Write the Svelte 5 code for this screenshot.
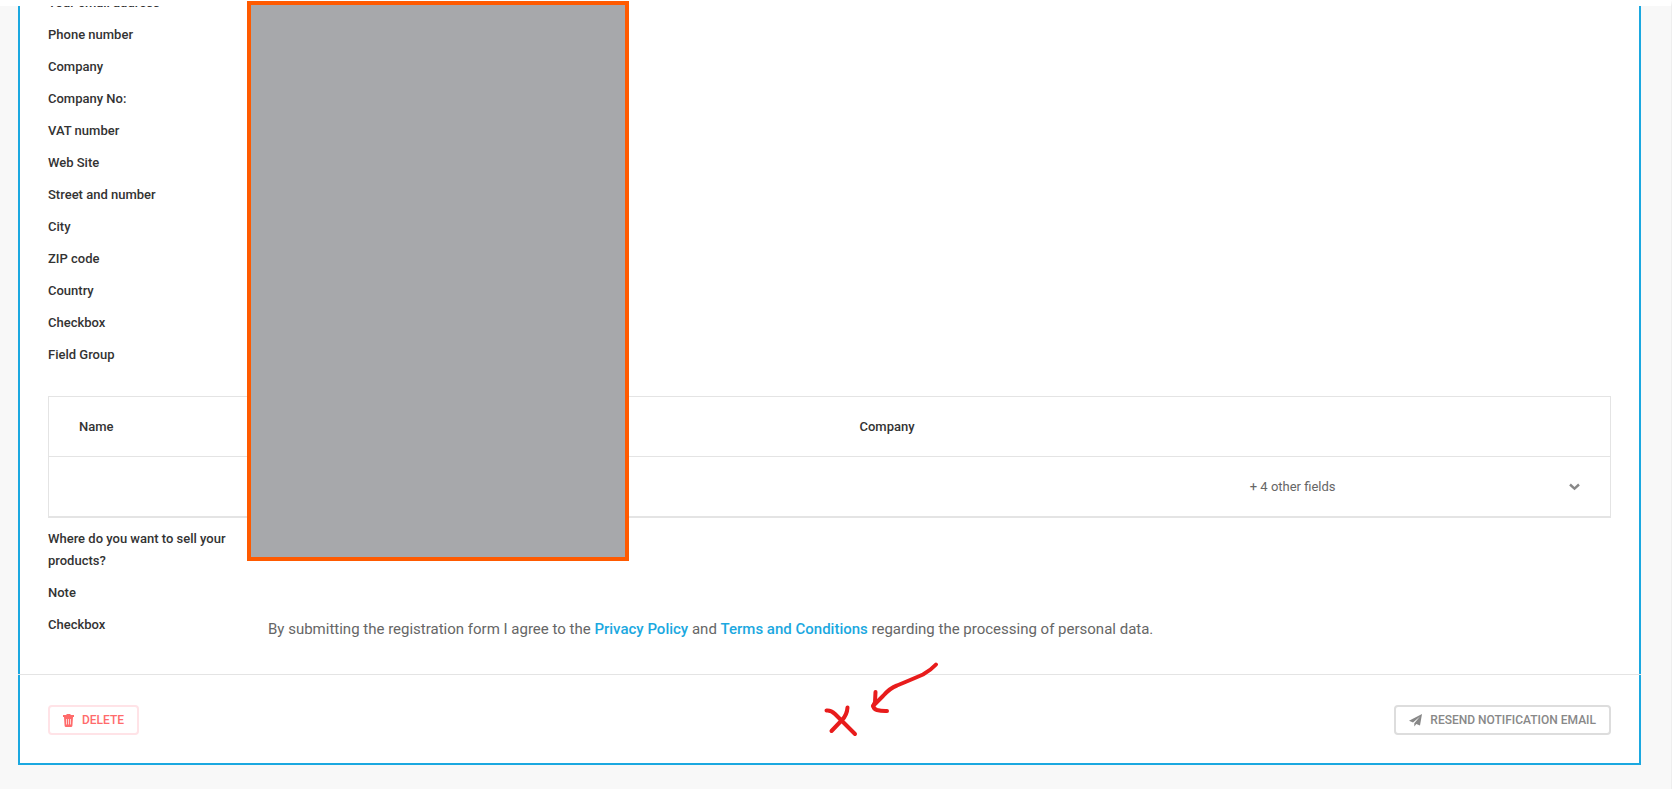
<script lang="ts">
	interface Field {
		label: string;
		consent?: boolean;
	}

	const fields: Field[] = [
		{ label: 'Your email address' },
		{ label: 'Phone number' },
		{ label: 'Company' },
		{ label: 'Company No:' },
		{ label: 'VAT number' },
		{ label: 'Web Site' },
		{ label: 'Street and number' },
		{ label: 'City' },
		{ label: 'ZIP code' },
		{ label: 'Country' },
		{ label: 'Checkbox' },
		{ label: 'Field Group' }
	];

	const moreFields: Field[] = [
		{ label: 'Where do you want to sell your products?' },
		{ label: 'Note' },
		{ label: 'Checkbox', consent: true }
	];
</script>

{#snippet fieldRow(field: Field)}
	<div class="field">
		<dt class="field-label">{field.label}</dt>
		<dd class="field-value">
			{#if field.consent}
				<p class="consent">
					By submitting the registration form I agree to the <a href="#privacy">Privacy Policy</a> and
					<a href="#terms">Terms and Conditions</a> regarding the processing of personal data.
				</p>
			{/if}
		</dd>
	</div>
{/snippet}

<div class="page">
	<main class="card">
		<div class="card-body">
			<dl class="fields scrolled">
				{#each fields as field}
					{@render fieldRow(field)}
				{/each}
			</dl>

			<table class="group">
				<thead>
					<tr>
						<th>Name</th>
						<th></th>
						<th>Company</th>
						<th></th>
					</tr>
				</thead>
				<tbody>
					<tr>
						<td></td>
						<td></td>
						<td></td>
						<td>
							<div class="more">
								<span>+ 4 other fields</span>
								<button class="expand" type="button" aria-label="Expand">
									<svg width="11" height="8" viewBox="0 0 11 8">
										<path d="M1 1.5L5.500 5.700L10 1.5" fill="none" stroke="#888" stroke-width="2.4" />
									</svg>
								</button>
							</div>
						</td>
					</tr>
				</tbody>
			</table>

			<dl class="fields">
				{#each moreFields as field}
					{@render fieldRow(field)}
				{/each}
			</dl>
		</div>

		<div class="divider"></div>

		<!-- Actions -->
		<div class="actions">
			<button class="btn danger" type="button">
				<svg width="11" height="13" viewBox="0 0 11 13">
					<path
						fill="currentColor"
						fill-rule="evenodd"
						d="M3.500 0h4v1H11v2H0V1h3.500zM1 3h9L9.400 11.700Q9.300 13 8 13H3Q1.700 13 1.600 11.700zM3.100 5v5.500h.7V5zM5.150 5v5.500h.7V5zM7.200 5v5.500h.7V5z"
					/>
				</svg>
				DELETE
			</button>
			<button class="btn" type="button">
				<svg width="13" height="13" viewBox="0 0 13 13">
					<path
						fill="currentColor"
						d="M13 0L11 11.500L7.300 9.900L5.300 12.600V9.200L11 2.600L4 8.400L0 6.800z"
					/>
				</svg>
				RESEND NOTIFICATION EMAIL
			</button>
		</div>
	</main>

	<!-- Markup laid over the page -->
	<div class="redaction"></div>
	<svg class="pen" width="130" height="84" viewBox="0 0 130 84">
		<path d="M116 4.500Q111 10 103 14.500Q88 21 77 25.500Q70 28 63 36L53 46" />
		<path d="M55.500 32L55 42Q51 48 57 50Q61 51.200 67 51" />
		<path d="M6.500 50.500Q11 50 15 54L35 74" />
		<path d="M27.500 47.500Q27 55 22 60L11.500 71" />
	</svg>
</div>

<style>
	:global(body) {
		margin: 0;
		background: #fff;
	}

	.page {
		position: relative;
		box-sizing: border-box;
		min-height: 100vh;
		padding: 0 30px 24px 18px;
		border-top: 6px solid #fff;
		border-right: 1px solid #eee;
		background: #f8f8f8;
		font-family: Roboto, 'Liberation Sans', sans-serif;
		font-size: 13px;
		line-height: 22px;
		color: #666;
	}

	.card {
		border: 2px solid #1ba8e0;
		border-top: 0;
		background: #fff;
	}

	.card-body {
		overflow: hidden;
		padding: 0 28px 33px;
	}

	/* Fields */
	.fields {
		margin: 5px 0 0;
	}

	/* First row is partly scrolled out of view */
	.fields.scrolled {
		margin-top: -19px;
	}

	.field {
		display: grid;
		grid-template-columns: 200px 1fr;
		column-gap: 20px;
	}

	.field-label {
		padding: 5px 0;
		box-sizing: border-box;
		font-weight: 500;
		color: #333;
	}

	.field-value {
		margin: 0;
	}

	.consent {
		margin: 0;
		padding: 9px 0 0;
		font-size: 15px;
	}

	.consent a {
		font-weight: 500;
		color: #1ba8e0;
		text-decoration: none;
	}

	/* Field group */
	.group {
		width: 100%;
		margin-top: 25px;
		table-layout: fixed;
		border: 1px solid #e4e4e4;
		border-bottom-width: 2px;
		border-spacing: 0;
	}

	.group th,
	.group td {
		height: 59px;
		padding: 0 30px;
		text-align: left;
	}

	.group th {
		border-bottom: 1px solid #e4e4e4;
		font-weight: 500;
		color: #333;
	}

	.more {
		display: flex;
		align-items: center;
		justify-content: space-between;
	}

	.expand {
		display: flex;
		padding: 0;
		border: 0;
		background: none;
		cursor: pointer;
	}

	.divider {
		height: 1px;
		margin: 0 -2px;
		background: #e4e4e4;
	}

	/* Actions */
	.actions {
		display: flex;
		justify-content: space-between;
		padding: 30px 28px 28px;
	}

	.btn {
		display: flex;
		align-items: center;
		gap: 8px;
		height: 30px;
		padding: 0 13px;
		border: 2px solid #ddd;
		border-radius: 4px;
		background: #fff;
		font-family: inherit;
		font-size: 12px;
		font-weight: 500;
		color: #888;
		cursor: pointer;
	}

	.btn.danger {
		border-color: #ffe3e7;
		color: #ff6b6b;
	}

	/* Overlays */
	.redaction {
		position: absolute;
		top: -5px;
		left: 247px;
		box-sizing: border-box;
		width: 382px;
		height: 560px;
		border: 4px solid #ff5a00;
		background: #a7a8ab;
	}

	.pen {
		position: absolute;
		top: 654px;
		left: 820px;
		fill: none;
		stroke: #e81c1c;
		stroke-width: 4;
		stroke-linecap: round;
		stroke-linejoin: round;
	}
</style>
